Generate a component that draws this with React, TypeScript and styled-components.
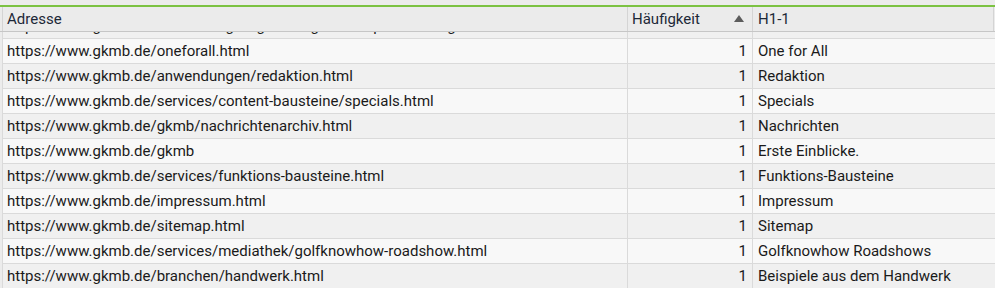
import styled, { createGlobalStyle } from 'styled-components'

const GlobalStyle = createGlobalStyle`
    html, body {
        margin: 0;
        padding: 0;
        background: #ececec;
        font-family: Roboto, "Noto Sans", sans-serif;
    }
`

type Row = { url: string; count: number; h1: string }

const rows: Row[] = [
    { url: 'https://www.gkmb.de/anwendungen/golfanlagen/web-portal-fuer-golfclubs.html', count: 1, h1: 'Wir lieben Golf' },
    { url: 'https://www.gkmb.de/oneforall.html', count: 1, h1: 'One for All' },
    { url: 'https://www.gkmb.de/anwendungen/redaktion.html', count: 1, h1: 'Redaktion' },
    { url: 'https://www.gkmb.de/services/content-bausteine/specials.html', count: 1, h1: 'Specials' },
    { url: 'https://www.gkmb.de/gkmb/nachrichtenarchiv.html', count: 1, h1: 'Nachrichten' },
    { url: 'https://www.gkmb.de/gkmb', count: 1, h1: 'Erste Einblicke.' },
    { url: 'https://www.gkmb.de/services/funktions-bausteine.html', count: 1, h1: 'Funktions-Bausteine' },
    { url: 'https://www.gkmb.de/impressum.html', count: 1, h1: 'Impressum' },
    { url: 'https://www.gkmb.de/sitemap.html', count: 1, h1: 'Sitemap' },
    { url: 'https://www.gkmb.de/services/mediathek/golfknowhow-roadshow.html', count: 1, h1: 'Golfknowhow Roadshows' },
    { url: 'https://www.gkmb.de/branchen/handwerk.html', count: 1, h1: 'Beispiele aus dem Handwerk' },
]

// column widths, left border included
const cols = [625, 125, 242]

export default function App() {
    return (
        <Grid>
            <GlobalStyle />
            <TopStrip />
            <HeaderRow>
                <HeadCell $width={cols[0]}>Adresse</HeadCell>
                <HeadCell $width={cols[1]}>
                    Häufigkeit
                    <SortIcon width="10" height="7" viewBox="0 0 10 7">
                        <path d="M5 0 L10 7 L0 7 Z" fill="#5c5c5c" />
                    </SortIcon>
                </HeadCell>
                <HeadCell $width={cols[2]}>H1-1</HeadCell>
            </HeaderRow>
            <Body>
                {rows.map((row, index) => (
                    <DataRow key={index} $odd={index % 2 === 0} $clipped={index === 0}>
                        <Cell $width={cols[0]}>{row.url}</Cell>
                        <Cell $width={cols[1]} $right>{row.count}</Cell>
                        <Cell $width={cols[2]}>{row.h1}</Cell>
                    </DataRow>
                ))}
            </Body>
        </Grid>
    )
}

const Grid = styled.div`
    width: 995px;
    height: 288px;
    overflow: hidden;
    display: flex;
    flex-direction: column;
    background: #ececec;
    color: #1a1a1a;
    font-size: 15px;
`

const TopStrip = styled.div`
    height: 5px;
    border-bottom: 2px solid #7cc242;
    background: #ececec;
    flex-shrink: 0;
`

const HeaderRow = styled.div`
    display: flex;
    height: 24px;
    padding-left: 2px;
    border-bottom: 1px solid #c6c6c6;
    background: #ebebeb;
    flex-shrink: 0;
`

const HeadCell = styled.div<{ $width: number }>`
    display: flex;
    align-items: center;
    justify-content: space-between;
    flex-shrink: 0;
    width: ${p => p.$width}px;
    box-sizing: border-box;
    padding: 0 8px 0 4px;
    border-left: 1px solid #d4d4d4;
    color: #1d2838;
    white-space: nowrap;
    &:last-child {
        padding-left: 5px;
        border-right: 1px solid #d4d4d4;
    }
`

const SortIcon = styled.svg`
    margin-top: -2px;
`

const Body = styled.div`
    display: flex;
    flex-direction: column;
    overflow: hidden;
    padding-left: 2px;
`

const DataRow = styled.div<{ $odd: boolean; $clipped?: boolean }>`
    display: flex;
    height: 24px;
    flex-shrink: 0;
    margin-top: ${p => (p.$clipped ? '-18px' : '0')};
    border-bottom: 1px solid #dadada;
    background: ${p => (p.$odd ? '#f0f0f0' : '#f8f8f8')};
`

const Cell = styled.div<{ $width: number; $right?: boolean }>`
    display: flex;
    align-items: center;
    justify-content: ${p => (p.$right ? 'flex-end' : 'flex-start')};
    flex-shrink: 0;
    width: ${p => p.$width}px;
    box-sizing: border-box;
    padding: ${p => (p.$right ? '0 5px 0 0' : '0 4px')};
    border-left: 1px solid #dadada;
    white-space: nowrap;
    overflow: hidden;
    &:last-child {
        padding-left: 5px;
    }
`
